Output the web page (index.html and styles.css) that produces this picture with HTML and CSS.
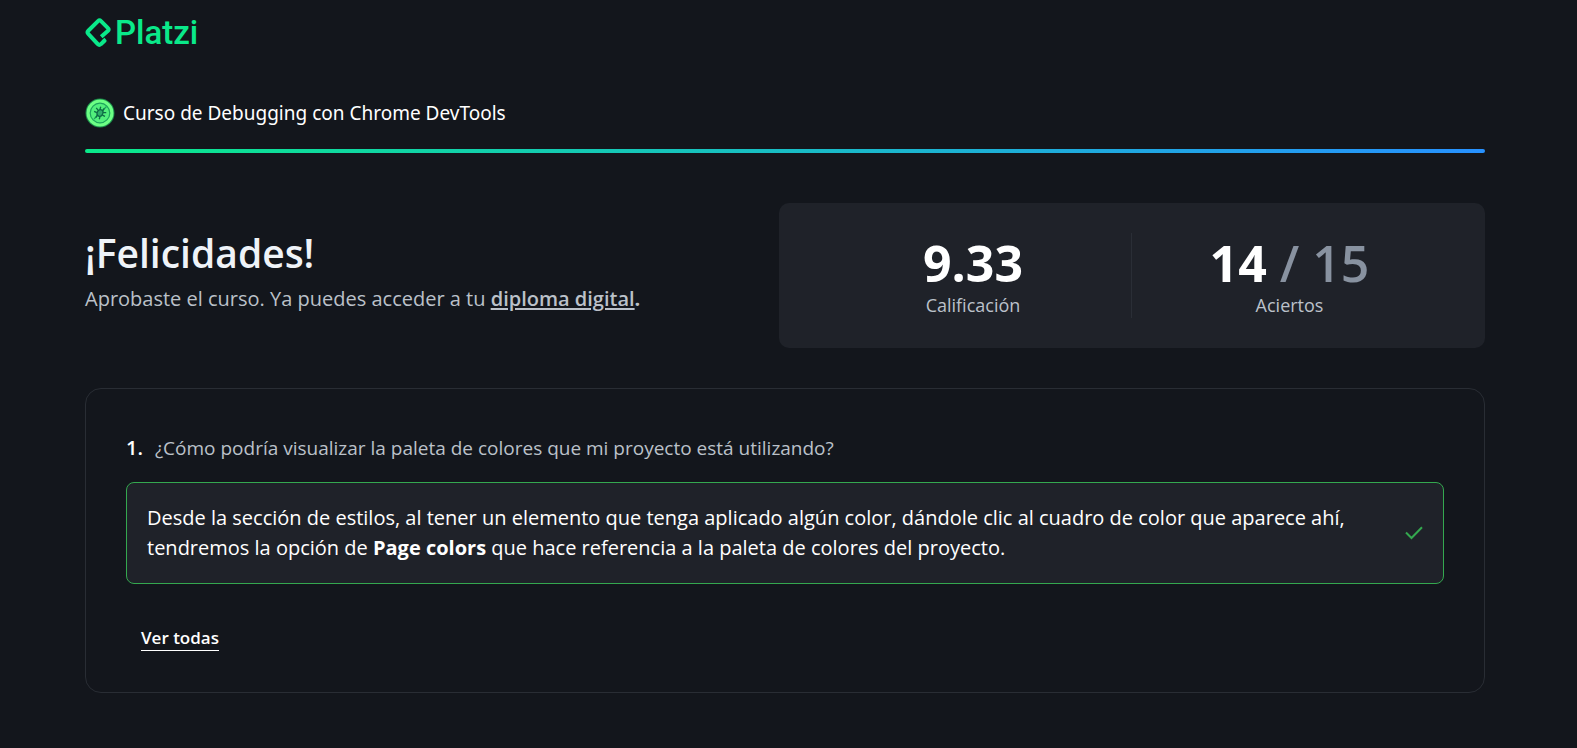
FILE: index.html
```html
<!DOCTYPE html>
<html lang="es">
<head>
<meta charset="utf-8">
<meta name="viewport" content="width=device-width, initial-scale=1">
<title>Platzi - Resultado del examen</title>
<link rel="stylesheet" href="styles.css">
</head>
<body>
<div class="page">
  <header class="header">
    <a class="logo" href="#" aria-label="Platzi">
      <svg class="logo-mark" viewBox="0 0 28 32" aria-hidden="true">
        <path d="M16.200 19.800 L23 13.800 Q24.400 12.500 23 11.200 L16 4.200 Q14.500 2.700 13 4.200 L3.300 13.700 Q1.800 15.200 3.300 16.800 L12.800 27.200 Q14.300 28.700 15.800 27.200 L19.500 23.800 L18 22.200" />
      </svg>
      <span class="logo-text">Platzi</span>
    </a>
    <div class="course">
      <svg class="badge" viewBox="0 0 30 30" aria-hidden="true">
        <circle cx="15" cy="15" r="14.500" fill="#1c8c4c"/>
        <circle cx="15" cy="15" r="13.500" fill="#6dff85"/>
        <circle cx="15" cy="15" r="9.800" fill="#52ef7c" stroke="#1da45d" stroke-width="1.200"/>
        <path d="M9 21L21.500 8.500" stroke="#1da45d" stroke-width="1.200"/>
        <g transform="rotate(25 15 15)" stroke="#0d6b45" stroke-width="1.300" fill="none">
          <ellipse cx="15" cy="15" rx="2.800" ry="3.400" fill="#2fae68"/>
          <path d="M13.500 12l-.5-3M16.500 12l.5-3M12.500 13.500L9.500 12M12 16H9M13.500 18l-.5 3M17.500 13.500l3-1.500M18 16h3M16.500 18l.5 3"/>
        </g>
      </svg>
      <p class="course-name">Curso de Debugging con Chrome DevTools</p>
    </div>
    <div class="progress"></div>
  </header>
  <main>
    <section class="summary">
      <div class="message">
        <h1 class="title">¡Felicidades!</h1>
        <p class="subtitle">Aprobaste el curso. Ya puedes acceder a tu <a class="diploma" href="#">diploma digital</a><b>.</b></p>
      </div>
      <div class="scores">
        <div class="score">
          <p class="value value-semi">9.33</p>
          <p class="label">Calificación</p>
        </div>
        <div class="score score-split">
          <p class="value"><span>14</span><span class="total"> / 15</span></p>
          <p class="label">Aciertos</p>
        </div>
      </div>
    </section>
    <section class="questions">
      <div class="question"><span class="number">1.</span><p class="question-text">¿Cómo podría visualizar la paleta de colores que mi proyecto está utilizando?</p></div>
      <div class="answer">
        <p class="answer-text">Desde la sección de estilos, al tener un elemento que tenga aplicado algún color, dándole clic al cuadro de color que aparece ahí, tendremos la opción de <b>Page colors</b> que hace referencia a la paleta de colores del proyecto.</p>
        <svg class="check" viewBox="0 0 18 14" aria-hidden="true"><path d="M1 6.500L6.500 12L17 1.200"/></svg>
      </div>
      <button class="more" type="button">Ver todas</button>
    </section>
  </main>
</div>
</body>
</html>
```
FILE: styles.css
```css
* { box-sizing: border-box; }
body {
  margin: 0;
  background: #13161c;
  color: #fff;
  font-family: "Open Sans", "Noto Sans", sans-serif;
  font-size: 20px;
  line-height: 30px;
}
p, h1 { margin: 0; }
.page { padding: 12px 92px 48px 85px; }
.logo {
  display: flex;
  align-items: center;
  width: max-content;
  height: 42px;
  gap: 2px;
  color: #0ae98a;
  text-decoration: none;
}
.logo-mark { width: 28px; height: 32px; fill: none; stroke: currentColor; stroke-width: 4; stroke-linejoin: round; }
.logo-text { font-family: Roboto, sans-serif; font-size: 33px; font-weight: 500; line-height: 42px; }
.course { display: flex; align-items: center; gap: 8px; margin-top: 44px; }
.course-name, .question-text { font-size: 19px; }
.course-name { font-family: "Noto Sans", sans-serif; }
.badge { width: 30px; height: 30px; }
.progress { height: 4px; margin-top: 21px; border-radius: 2px; background: linear-gradient(90deg, #0ae98a, #2791ff); }
.summary { display: grid; grid-template-columns: minmax(0, 1fr) minmax(0, 1fr); align-items: center; margin-top: 50px; }
.message { padding-bottom: 10px; }
.title { color: #eff3f8; font-size: 39px; font-weight: 600; line-height: 56px; }
.subtitle { color: #bbc1c9; line-height: 36px; }
.diploma { color: inherit; font-weight: 600; text-decoration-thickness: 2px; text-underline-offset: 2px; }
.scores { display: grid; grid-template-columns: 1fr 1fr; margin-left: -6px; padding: 30px 38px 30px 36px; border-radius: 10px; background: #1f2229; text-align: center; }
.score-split { border-left: 1px solid #2a2e36; }
.value { font-size: 50px; font-weight: 700; line-height: 60px; }
.total { color: #8892a0; font-weight: 600; }
.label { color: #bbc1c9; font-size: 18px; line-height: 25px; }
.questions { margin-top: 40px; padding: 40px; border: 1px solid #292d34; border-radius: 16px; }
.question { display: flex; gap: 12px; padding: 3px 0 5px; line-height: 32px; color: #bbc1c9; }
.number { color: #fff; font-weight: 600; }
.answer { display: flex; align-items: center; justify-content: space-between; gap: 32px; margin-top: 13px; padding: 20px; border: 1px solid #34a84f; border-radius: 8px; background: #1f2229; }
.check { flex: none; width: 18px; height: 14px; fill: none; stroke: #34a84f; stroke-width: 2; }
.more { display: block; margin: 40px 15px 1px; padding: 1px 0 0; border: 0; border-bottom: 1px solid #fff; background: none; color: #fff; font: 600 17px/25px "Open Sans", "Noto Sans", sans-serif; }
```
